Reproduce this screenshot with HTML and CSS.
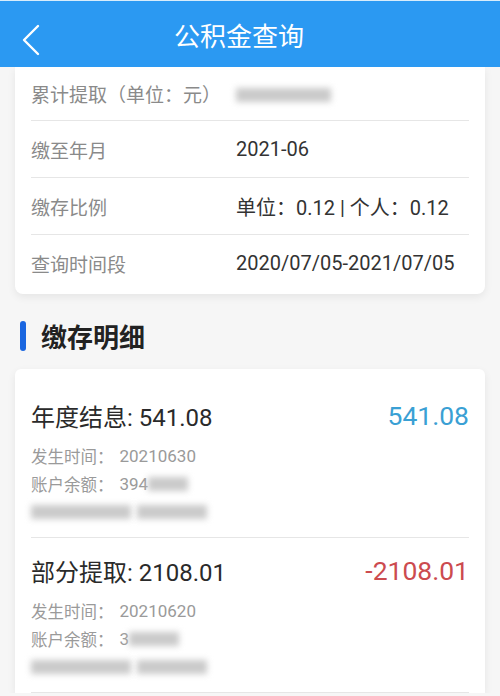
FILE: index.html
```html
<!DOCTYPE html>
<html lang="zh-CN">
<head>
    <meta charset="UTF-8">
    <meta name="viewport" content="width=device-width, initial-scale=1.0">
    <title>公积金查询</title>
    <link rel="stylesheet" href="styles.css">
</head>
<body>
    <div class="header">
        <svg class="back" width="20" height="32" viewBox="0 0 20 32">
            <path d="M17 2 L3 16 L17 30" fill="none" stroke="#fff" stroke-width="2.4" stroke-linecap="round" stroke-linejoin="round"/>
        </svg>
        <h1>公积金查询</h1>
    </div>

    <div class="card info">
        <div class="row first">
            <span class="label">累计提取（单位：元）</span>
            <span class="value"><span class="blur w95"></span></span>
        </div>
        <div class="row">
            <span class="label">缴至年月</span>
            <span class="value">2021-06</span>
        </div>
        <div class="row">
            <span class="label">缴存比例</span>
            <span class="value">单位：0.12 | 个人：0.12</span>
        </div>
        <div class="row">
            <span class="label">查询时间段</span>
            <span class="value">2020/07/05-2021/07/05</span>
        </div>
    </div>

    <div class="section-title">
        <span class="bar"></span>
        <span>缴存明细</span>
    </div>

    <div class="card details">
        <div class="item">
            <div class="item-head">
                <span class="item-title">年度结息: 541.08</span>
                <span class="amount in">541.08</span>
            </div>
            <div class="sub">发生时间：<span class="num">20210630</span></div>
            <div class="sub">账户余额：<span class="num">394</span><span class="blur w40"></span></div>
            <div class="sub"><span class="blur w100"></span> <span class="blur w70"></span></div>
        </div>
        <div class="item">
            <div class="item-head">
                <span class="item-title">部分提取: 2108.01</span>
                <span class="amount out">-2108.01</span>
            </div>
            <div class="sub">发生时间：<span class="num">20210620</span></div>
            <div class="sub">账户余额：<span class="num">3</span><span class="blur w60"></span></div>
            <div class="sub"><span class="blur w100"></span> <span class="blur w70"></span></div>
        </div>
    </div>
</body>
</html>
```

FILE: styles.css
```css
body {
    margin: 0;
    background-color: #f6f6f6;
    font-family: Roboto, "Noto Sans CJK SC", sans-serif;
    color: #333;
    overflow: hidden;
}
.header {
    height: 66px;
    border-top: 1px solid #d8ecfb;
    background-color: #2b99f2;
    display: flex;
    align-items: center;
    justify-content: center;
    position: relative;
}
.header h1 {
    margin: 0 0 0 -22px;
    color: #fff;
    font-size: 26px;
    font-weight: normal;
}
.back {
    position: absolute;
    left: 21px;
    top: 23px;
}
.card {
    background-color: #fff;
    margin: 0 15px;
    border-radius: 0 0 8px 8px;
    box-shadow: 0 3px 8px rgba(0,0,0,0.07);
}
.info {
    padding: 0 16px 3px;
}
.row {
    height: 56px;
    display: flex;
    align-items: center;
    border-top: 1px solid #e6e6e6;
}
.row.first {
    height: 53px;
    border-top: none;
}
.label {
    width: 205px;
    font-size: 19px;
    color: #8a8a8a;
}
.value {
    font-size: 20px;
    color: #333;
}
.blur {
    display: inline-block;
    height: 14px;
    background-color: #cacaca;
    filter: blur(3px);
    vertical-align: middle;
}
.w40 { width: 40px; }
.w60 { width: 50px; }
.w70 { width: 70px; }
.w95 { width: 95px; }
.w100 { width: 100px; }
.section-title {
    display: flex;
    align-items: center;
    height: 67px;
    padding: 8px 0 0 20px;
    font-size: 26px;
    font-weight: bold;
    color: #222;
}
.section-title .bar {
    width: 6px;
    height: 30px;
    border-radius: 3px;
    background-color: #1a66e0;
    margin-right: 15px;
}
.details {
    border-radius: 6px 6px 0 0;
    padding: 14px 16px 0;
}
.item {
    padding: 15px 0 11px;
    border-bottom: 1px solid #e6e6e6;
}
.item-head {
    display: flex;
    justify-content: space-between;
    align-items: center;
    height: 34px;
    margin-bottom: 10px;
}
.item-title {
    font-size: 24px;
    color: #2a2a2a;
}
.amount {
    font-size: 26.5px;
}
.amount.in {
    color: #3aa0d4;
}
.amount.out {
    color: #cc4b4f;
}
.sub {
    height: 28px;
    display: flex;
    align-items: center;
    font-size: 16.5px;
    color: #9a9a9a;
}
.sub .num {
    font-size: 17px;
    margin-left: 6px;
}
.sub .blur + .blur {
    margin-left: 6px;
}
```
